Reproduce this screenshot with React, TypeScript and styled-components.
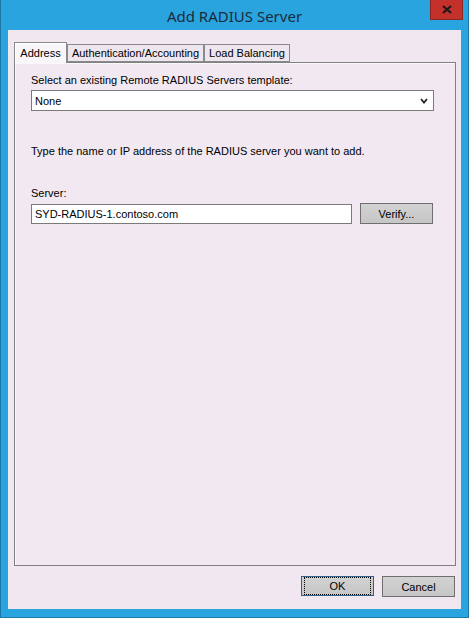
import { createGlobalStyle, styled } from 'styled-components'

const GlobalStyle = createGlobalStyle`
  html, body {
    margin: 0;
    padding: 0;
  }
  body {
    font-family: "Liberation Sans", Arial, sans-serif;
    font-size: 11px;
    color: #000;
  }
  * {
    box-sizing: border-box;
  }
`

const Window = styled.div`
  width: 469px;
  height: 618px;
  background: #29a4de;
  border: 1px solid #1f79a8;
  border-top: none;
  display: flex;
  flex-direction: column;
`

const TitleBar = styled.div`
  height: 30px;
  display: grid;
  grid-template-columns: 1fr auto 1fr;
`

const Title = styled.div`
  grid-column: 2;
  align-self: center;
  font-family: "Noto Sans", "Open Sans", sans-serif;
  font-size: 15px;
  color: #1b2b3c;
  padding-top: 1px;
`

const CloseButton = styled.button`
  grid-column: 3;
  justify-self: end;
  align-self: start;
  width: 33px;
  height: 20px;
  margin-right: 5px;
  padding: 0;
  border: 1px solid #8f2420;
  border-top: none;
  background: #c4312b;
  display: flex;
  align-items: center;
  justify-content: center;
`

const Client = styled.div`
  flex: 1;
  margin: 0 7px 8px 7px;
  background: #f0e7f0;
  display: flex;
  flex-direction: column;
  padding: 12px 5px 0 6px;
`

const TabStrip = styled.div`
  height: 20px;
  display: flex;
  align-items: flex-end;
`

const Tab = styled.div<{ $active?: boolean; $w: number }>`
  width: ${p => p.$w}px;
  height: ${p => (p.$active ? 21 : 18)}px;
  margin-bottom: ${p => (p.$active ? -1 : 0)}px;
  position: relative;
  z-index: ${p => (p.$active ? 1 : 0)};
  border: 1px solid #8a8a8a;
  border-bottom: ${p => (p.$active ? 'none' : '1px solid #8a8a8a')};
  background: ${p => (p.$active ? '#f9f6f9' : '#eee6ee')};
  box-shadow: ${p => (p.$active ? 'inset 1px 1px 0 #fff' : 'none')};
  padding-top: ${p => (p.$active ? 4 : 2)}px;
  text-align: center;
  line-height: 13px;
  white-space: nowrap;
`

const Panel = styled.div`
  flex: 1;
  border: 1px solid #808080;
  background: #f1e8f1;
  box-shadow: inset 1px 1px 0 #fbf8fb;
  padding: 11px 21px 0 16px;
  display: flex;
  flex-direction: column;
`

const Label = styled.div<{ $gap?: number }>`
  line-height: 13px;
  margin-top: ${p => p.$gap ?? 0}px;
  margin-bottom: 3px;
`

const Select = styled.div`
  height: 21px;
  background: #fff;
  border: 1px solid #7a7a7a;
  display: flex;
  align-items: center;
  justify-content: space-between;
  padding: 0 5px 0 3px;
`

const Row = styled.div`
  display: flex;
  align-items: center;
  gap: 8px;
`

const TextBox = styled.div`
  width: 321px;
  height: 20px;
  background: #fff;
  border: 1px solid #7a7a7a;
  padding: 0 3px;
  display: flex;
  align-items: center;
`

const Button = styled.button<{ $focused?: boolean }>`
  width: 73px;
  height: ${p => (p.$focused ? 20 : 21)}px;
  font-family: "Liberation Sans", Arial, sans-serif;
  font-size: 11px;
  color: #000;
  padding: 0;
  background: linear-gradient(#d2d2d2, #c6c6c6);
  border: 1px solid ${p => (p.$focused ? '#2f5f8f' : '#6f6f6f')};
  display: flex;
  align-items: center;
  justify-content: center;
  span {
    display: flex;
    align-items: center;
    justify-content: center;
    width: 100%;
    height: 100%;
    border: ${p => (p.$focused ? '1px dotted #000' : 'none')};
    margin: ${p => (p.$focused ? 2 : 0)}px;
  }
`

const Footer = styled.div`
  display: flex;
  justify-content: flex-end;
  gap: 8px;
  padding: 10px 1px 12px 0;
`

export default function App() {
  return (
    <>
      <GlobalStyle />
      <Window>
        <TitleBar>
          <Title>Add RADIUS Server</Title>
          <CloseButton aria-label="Close">
            <svg width="10" height="9" viewBox="0 0 10 9">
              <path d="M1 1 L9 8 M9 1 L1 8" stroke="#1a1a1a" strokeWidth="2.2" />
            </svg>
          </CloseButton>
        </TitleBar>
        <Client>
          <TabStrip>
            <Tab $active $w={53}>Address</Tab>
            <Tab $w={137}>Authentication/Accounting</Tab>
            <Tab $w={86}>Load Balancing</Tab>
          </TabStrip>
          <Panel>
            <Label>Select an existing Remote RADIUS Servers template:</Label>
            <Select>
              <span>None</span>
              <svg width="8" height="6" viewBox="0 0 8 6">
                <path d="M1 1 L4 4.5 L7 1" fill="none" stroke="#222" strokeWidth="1.8" />
              </svg>
            </Select>
            <Label $gap={34}>Type the name or IP address of the RADIUS server you want to add.</Label>
            <Label $gap={26}>Server:</Label>
            <Row>
              <TextBox>SYD-RADIUS-1.contoso.com</TextBox>
              <Button>
                <span>Verify...</span>
              </Button>
            </Row>
          </Panel>
          <Footer>
            <Button $focused>
              <span>OK</span>
            </Button>
            <Button>
              <span>Cancel</span>
            </Button>
          </Footer>
        </Client>
      </Window>
    </>
  )
}
